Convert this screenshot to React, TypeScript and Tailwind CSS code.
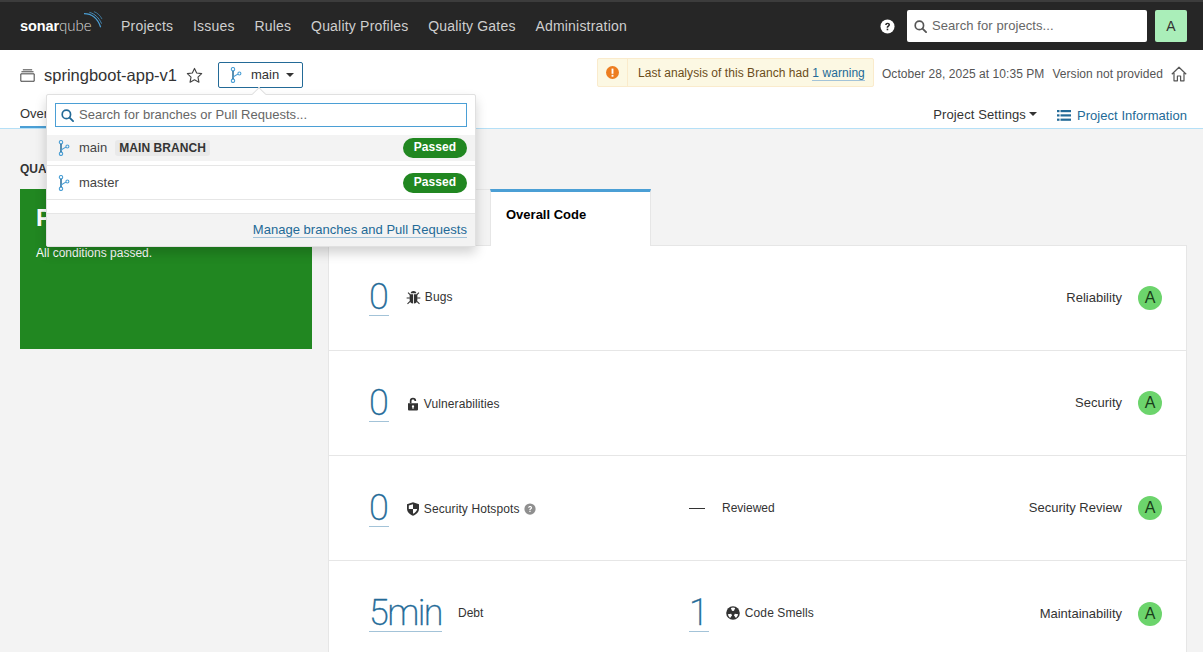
import React from "react";

const BranchIcon = ({ className = "" }: { className?: string }) => (
  <svg viewBox="0 0 12 16" width="12" height="16" className={className} fill="none" stroke="#236a97" strokeWidth="1">
    <circle cx="3" cy="2.200" r="1.700" stroke="#4b9fd5" strokeWidth="1.100" />
    <circle cx="3" cy="13.800" r="1.700" stroke="#4b9fd5" strokeWidth="1.100" />
    <circle cx="9.400" cy="6.500" r="1.500" stroke="#4b9fd5" strokeWidth="1.100" />
    <path d="M3 3.900V12.100" strokeWidth="1.500" />
    <path d="M8 7.300C6 8.400 3.600 8.400 3 11" stroke="#4b9fd5" strokeWidth="1.100" />
  </svg>
);

const Bug = () => (
  <svg viewBox="0 0 14 14" width="15" height="15" fill="#333">
    <path d="M4.300 3.100C4.600 1.700 5.600 1 7 1s2.400.7 2.700 2.100z" />
    <path d="M3.400 4h3.200v8.600C4.600 12.400 3.400 11 3.400 9zM7.400 4h3.200v5c0 2-1.200 3.400-3.200 3.600z" />
    <path d="M1.900 2.400l1.900 1.900M12.100 2.400l-1.900 1.900M.6 7.400h3M13.400 7.400h-3M1.400 13l2.400-2.400M12.600 13l-2.400-2.400" stroke="#333" strokeWidth="1" fill="none" />
  </svg>
);

const Lock = () => (
  <svg viewBox="0 0 12 14" width="12" height="14" fill="#333">
    <path fillRule="evenodd" d="M1 6.200h10v6.300c0 .5-.4.9-.9.9H1.900c-.5 0-.9-.4-.9-.9zM6 8.200a1.200 1.200 0 0 0-.6 2.200v1.300h1.200v-1.300A1.200 1.200 0 0 0 6 8.200z" />
    <path d="M2.800 6.200V4C2.800 2 4 .8 6 .8S9.200 2 9.200 4h-1.700C7.500 3 7 2.400 6 2.400S4.500 3 4.500 4v2.200z" />
  </svg>
);

const Shield = () => (
  <svg viewBox="0 0 14 14" width="14" height="14">
    <path d="M7 .3L13 2.300v4.200c0 3.400-2.600 6-6 7.200-3.400-1.200-6-3.800-6-7.200V2.300z" fill="#333" />
    <path d="M7 2.200v4.800H2.800V3.400zM7 7h4.200c-.4 2.300-2 3.800-4.200 4.700z" fill="#fff" />
  </svg>
);

const Smell = () => (
  <svg viewBox="0 0 14 14" width="14" height="14">
    <circle cx="7" cy="7" r="6.800" fill="#333" />
    <path d="M4.800 1.900a5.400 5.400 0 0 1 4.400 0L7.900 5.100a2 2 0 0 0-1.800 0zM1.900 8.200l3.300-.4a2 2 0 0 0 .9 1.500l-2 2.700a5.400 5.400 0 0 1-2.200-3.800zM12.100 8.200l-3.300-.4a2 2 0 0 1-.9 1.500l2 2.700a5.400 5.400 0 0 0 2.200-3.800z" fill="#fff" />
  </svg>
);

const Help = ({ size, bg, fg }: { size: number; bg: string; fg: string }) => (
  <svg viewBox="0 0 16 16" width={size} height={size}>
    <circle cx="8" cy="8" r="7.500" fill={bg} />
    <path d="M5.500 6.300C5.600 4.800 6.600 4 8.100 4c1.500 0 2.600.9 2.600 2.200 0 1-.6 1.500-1.300 2-.6.400-.7.600-.7 1.200H7.100c0-1 .2-1.500 1-2.100.5-.4.900-.6.900-1.100 0-.5-.4-.8-.9-.8-.6 0-1 .4-1 1z" fill={fg} />
    <rect x="7.100" y="10.300" width="1.700" height="1.700" fill={fg} />
  </svg>
);

const SearchIcon = ({ color, size }: { color: string; size: number }) => (
  <svg viewBox="0 0 14 14" width={size} height={size} fill="none" stroke={color} strokeWidth="1.800">
    <circle cx="5.800" cy="5.800" r="4.500" />
    <path d="M9.200 9.200L13 13" strokeLinecap="round" strokeWidth="2" />
  </svg>
);

const Caret = ({ color = "#333" }: { color?: string }) => (
  <svg viewBox="0 0 8 4" width="8" height="4"><path d="M0 0h8L4 4z" fill={color} /></svg>
);

const Metric = ({ value, label, icon, gap, extra, labelClass = "" }: { value: string; label: string; icon?: React.ReactNode; gap: string; extra?: React.ReactNode; labelClass?: string }) => (
  <div className="flex items-center">
    <span className="border-b border-[#a3c3d8] text-[36px] leading-[35px] font-extralight text-[#236a97] [-webkit-text-stroke:0.35px_#236a97]" style={{ fontFamily: "Roboto, sans-serif" }}>{value}</span>
    <span className={`flex items-center text-[12px] tracking-[0.1px] text-[#333] ${labelClass}`}>
      {icon}
      <span className={gap}>{label}</span>
      {extra}
    </span>
  </div>
);

const Row = ({ left, mid, rating, last }: { left: React.ReactNode; mid?: React.ReactNode; rating: string; last?: boolean }) => (
  <div className={`flex h-[105px] shrink-0 items-center pl-[40px] pr-[24px] ${last ? "" : "border-b border-[#e6e6e6]"}`}>
    <div className="w-[320px]">{left}</div>
    <div className="flex-1">{mid}</div>
    <span className="text-[13px] text-[#333]">{rating}</span>
    <span className="ml-[16px] flex h-[24px] w-[24px] items-center justify-center rounded-full bg-[#6cd46c] text-[16px] text-[#1a3d1a]">A</span>
  </div>
);

const BranchRow = ({ name, main, active }: { name: string; main?: boolean; active?: boolean }) => (
  <div className={`flex h-[26px] items-center pl-[11px] pr-[8px] ${active ? "bg-[#f3f3f3]" : ""}`}>
    <BranchIcon />
    <span className="ml-[9px] text-[13px] text-[#444]">{name}</span>
    {main && <span className="ml-[8px] rounded-[3px] bg-[#e9e9e9] px-[4px] text-[12px] leading-[16px] font-bold tracking-[0.08px] text-[#333]">MAIN BRANCH</span>}
    <span className="ml-auto flex h-[20px] w-[64px] items-center justify-center rounded-full bg-[#218721] pb-[2px] text-[12px] font-bold tracking-[0.1px] text-white">Passed</span>
  </div>
);

export default function App() {
  return (
    <div className="relative h-[652px] w-[1203px] overflow-hidden bg-[#f3f3f3] text-[#333]" style={{ fontFamily: '"Liberation Sans", Arial, sans-serif' }}>
      {/* global nav */}
      <div className="flex h-[50px] items-center border-t-2 border-[#3c3c3c] bg-[#262626] pl-[20px] pr-[16px]">
        <div className="relative flex w-[83px] items-baseline leading-none text-white">
          <span className="text-[14.500px] font-bold tracking-[-0.1px]">sonar</span>
          <span className="text-[15px] font-light text-[#ddd]" style={{ fontFamily: "Lato, sans-serif" }}>qube</span>
          <svg viewBox="0 0 22 20" width="20" height="18" className="absolute right-0 top-[-7px]" fill="none" stroke="#4b9fd5">
            <path d="M1 3C9 3 16 8 19.500 18" strokeWidth="1.300" />
            <path d="M7 1.500C13 3 18 8 20.500 14" strokeWidth=".9" />
            <path d="M12 .7C16 2 19.500 5.500 21 9" strokeWidth=".7" />
          </svg>
        </div>
        <nav className="ml-[18px] flex gap-[19.800px] text-[14px] tracking-[0.2px] text-[#cfcfcf]">
          <span>Projects</span>
          <span>Issues</span>
          <span>Rules</span>
          <span>Quality Profiles</span>
          <span>Quality Gates</span>
          <span>Administration</span>
        </nav>
        <div className="ml-auto flex items-center">
          <Help size={15} bg="#fff" fg="#262626" />
          <div className="ml-[12px] flex h-[32px] w-[240px] items-center rounded-[2px] bg-white pl-[7px]">
            <SearchIcon color="#555" size={13} />
            <span className="ml-[5px] text-[13px] tracking-[0.08px] text-[#666]">Search for projects...</span>
          </div>
          <div className="ml-[8px] flex h-[32px] w-[32px] items-center justify-center rounded-[2px] bg-[#aaeeb9] text-[14px] text-[#333]">A</div>
        </div>
      </div>

      {/* project header */}
      <div className="h-[79px] border-b border-[#b5e0f7] bg-white pl-[20px] pr-[16px]">
        <div className="flex h-[50px] items-center">
          <svg viewBox="0 0 16 14" width="15" height="13" fill="none" stroke="#333" strokeWidth="1">
            <path d="M3 .9h10M1.500 3h13M.8 5.200h14.400v8H.8z" />
          </svg>
          <span className="ml-[9px] text-[16.500px] text-[#333]">springboot-app-v1</span>
          <svg viewBox="0 0 18 17" width="17" height="16" fill="none" stroke="#444" strokeWidth="1.200" className="ml-[9px]">
            <path d="M9 1.500l2.300 4.900 5.300.7-3.900 3.700 1 5.300L9 13.500l-4.700 2.600 1-5.300-3.900-3.700 5.300-.7z" strokeLinejoin="round" />
          </svg>
          <div className="ml-[15px] flex h-[26px] w-[85px] items-center rounded-[2px] border border-[#236a97] pl-[11px]">
            <BranchIcon />
            <span className="ml-[9px] text-[13px] text-[#333]">main</span>
            <span className="ml-[7px]"><Caret /></span>
          </div>
          <div className="ml-auto flex items-center self-start pt-[8px]">
            <div className="flex h-[29px] w-[277px] items-center rounded-[2px] border border-[#faebcc] bg-[#fcf8e3] text-[12px]">
              <span className="flex h-full w-[30px] shrink-0 items-center justify-center border-r border-[#faebcc]">
                <svg viewBox="0 0 14 14" width="13" height="13"><circle cx="7" cy="7" r="7" fill="#ed7d20" /><rect x="6" y="2.800" width="2" height="5.600" fill="#fff" /><rect x="6" y="9.500" width="2" height="2" fill="#fff" /></svg>
              </span>
              <span className="ml-[10px] tracking-[0.05px] whitespace-nowrap text-[#6b4d1a]">Last analysis of this Branch had <span className="border-b border-[#a3c3d8] text-[#236a97]">1 warning</span></span>
            </div>
            <span className="ml-[8px] mt-[3px] text-[12px] tracking-[0.06px] text-[#555]">October 28, 2025 at 10:35 PM</span>
            <span className="ml-[8px] mt-[3px] text-[12px] tracking-[0.06px] text-[#555]">Version not provided</span>
            <svg viewBox="0 0 16 16" width="16" height="16" fill="none" stroke="#555" strokeWidth="1.200" className="ml-[8px] mt-[2px]">
              <path d="M.8 8.200L8 1.200l7.200 7M3 7v7.800h3.400V10h3.200v4.800H13V7" strokeLinejoin="round" />
            </svg>
          </div>
        </div>
        <div className="flex h-[28px] items-start justify-between">
          <span className="block h-[28px] w-[100px] border-b-[2px] border-[#4b9fd5] pt-[4px] text-[13px] text-[#333]">Overview</span>
          <div className="flex items-center pt-[5px]">
            <span className="mt-[-2px] text-[13px] tracking-[0.1px] text-[#333]">Project Settings</span>
            <span className="ml-[3px] mt-[-2px]"><Caret /></span>
            <svg viewBox="0 0 14 11" width="14" height="11" className="ml-[20px] mt-[1px]" fill="#236a97">
              <rect x="0" y="0" width="2.500" height="2.200" /><rect x="3.500" y="0" width="10.500" height="2.200" />
              <rect x="0" y="4.300" width="2.500" height="2.200" /><rect x="3.500" y="4.300" width="10.500" height="2.200" />
              <rect x="0" y="8.600" width="2.500" height="2.200" /><rect x="3.500" y="8.600" width="10.500" height="2.200" />
            </svg>
            <span className="ml-[6px] mt-[1px] text-[13px] tracking-[0.05px] text-[#236a97]">Project Information</span>
          </div>
        </div>
      </div>

      {/* body */}
      <div className="flex gap-[16px] pl-[20px] pr-[16px]">
        <div className="w-[292px] shrink-0">
          <h2 className="mt-[32px] h-[28px] text-[12px] leading-[16px] font-bold text-[#333]">QUALITY GATE STATUS</h2>
          <div className="h-[160px] bg-[#218721] px-[16px] pt-[15px] text-white">
            <div className="text-[24px] leading-[28px] font-bold">Passed</div>
            <div className="mt-[12px] text-[12px]">All conditions passed.</div>
          </div>
        </div>
        <div className="flex-1 pt-[60px]">
          <div className="flex h-[56px]">
            <div className="w-[162px] border-t border-l border-[#e6e6e6] px-[16px] pt-[16px] text-[13px] font-bold">New Code</div>
            <div className="relative z-[1] h-[57px] w-[161px] border-x border-t-[3px] border-[#e6e6e6] border-t-[#4b9fd5] bg-white pl-[15px] pt-[13px] text-[13px] font-bold text-black">Overall Code</div>
          </div>
          <div className="flex flex-col border border-[#e6e6e6] bg-white">
            <Row left={<Metric value="0" label="Bugs" icon={<Bug />} gap="ml-[4px]" labelClass="mb-[2px] ml-[17px]" />} rating="Reliability" />
            <Row left={<div className="pt-[2px]"><Metric value="0" label="Vulnerabilities" icon={<Lock />} gap="ml-[5px]" labelClass="ml-[18px]" /></div>} rating="Security" />
            <Row
              left={<div className="pt-[2px]"><Metric value="0" label="Security Hotspots" icon={<Shield />} gap="ml-[4px]" labelClass="ml-[17px]" extra={<span className="ml-[4px]"><Help size={12} bg="#8f8f8f" fg="#fff" /></span>} /></div>}
              mid={<div className="flex items-center text-[12px]"><span className="h-px w-[16px] bg-[#333]" /><span className="ml-[17px]">Reviewed</span></div>}
              rating="Security Review"
            />
            <Row
              left={<div className="flex items-center"><span className="border-b border-[#a3c3d8] text-[36px] leading-[35px] font-extralight tracking-[-1.600px] text-[#236a97] [-webkit-text-stroke:0.35px_#236a97]" style={{ fontFamily: "Roboto, sans-serif" }}>5min</span><span className="mb-[2px] ml-[16px] text-[12px]">Debt</span></div>}
              mid={<Metric value="1" label="Code Smells" icon={<Smell />} gap="ml-[5px]" labelClass="mb-[2px] ml-[17px]" />}
              rating="Maintainability"
              last
            />
          </div>
        </div>
      </div>

      {/* branch menu overlay */}
      <div className="absolute left-[46px] top-[94px] z-10 w-[430px] rounded-[2px] border border-[#e0e0e0] bg-white shadow-[0_6px_12px_rgba(0,0,0,0.175)]">
        <div className="absolute left-[207px] top-[-6px] h-[10px] w-[10px] rotate-45 border-l border-t border-[#e0e0e0] bg-white" />
        <div className="relative px-[8px] pt-[8px]">
          <div className="flex h-[24px] items-center border border-[#4b9fd5] pl-[5px]">
            <SearchIcon color="#236a97" size={13} />
            <span className="ml-[5px] text-[13px] tracking-[0.03px] text-[#666]">Search for branches or Pull Requests...</span>
          </div>
        </div>
        <div className="mt-[8px]">
          <BranchRow name="main" main active />
        </div>
        <div className="mt-[4px] h-[35px] border-y border-[#e6e6e6] pt-[4px]"><BranchRow name="master" /></div>
        <div className="h-[13px]" />
        <div className="flex h-[33px] items-center justify-end border-t border-[#e6e6e6] bg-[#f3f3f3] pr-[8px] text-[13px]">
          <span className="border-b border-[#a3c3d8] leading-[15px] tracking-[0.03px] text-[#236a97]">Manage branches and Pull Requests</span>
        </div>
      </div>
    </div>
  );
}
